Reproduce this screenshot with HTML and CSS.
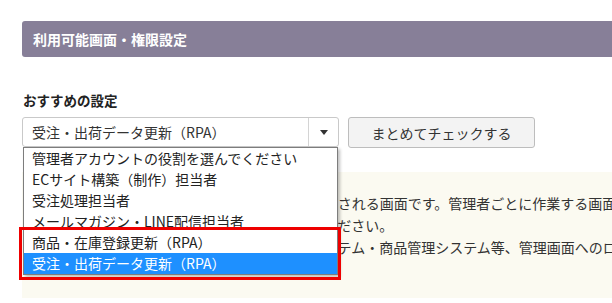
FILE: index.html
```html
<!DOCTYPE html>
<html lang="ja">
    <head>
        <meta charset="UTF-8" />
        <meta name="viewport" content="width=device-width, initial-scale=1.0" />
        <title>利用可能画面・権限設定</title>
        <link rel="stylesheet" href="styles.css">
    </head>
    <body>
        <div class="page">
            <h2 class="section-title">利用可能画面・権限設定</h2>

            <p class="field-label">おすすめの設定</p>
            <div class="preset-row">
                <div class="select-wrap">
                    <div class="select-box">
                        <span class="select-value">受注・出荷データ更新（RPA）</span>
                        <span class="select-arrow"></span>
                    </div>
                    <ul class="select-list">
                        <li>管理者アカウントの役割を選んでください</li>
                        <li>ECサイト構築（制作）担当者</li>
                        <li>受注処理担当者</li>
                        <li>メールマガジン・LINE配信担当者</li>
                        <li>商品・在庫登録更新（RPA）</li>
                        <li class="selected">受注・出荷データ更新（RPA）</li>
                    </ul>
                    <div class="highlight-box"></div>
                </div>
                <button class="check-all">まとめてチェックする</button>
            </div>

            <div class="note">
                <p>チェックした画面が、管理者のログイン後に表示される画面です。管理者ごとに作業する画面</p>
                <p>を選び、各画面の操作権限もあわせて設定してください。</p>
                <p>※ＲＰＡでは、受注管理システム・倉庫管理システム・商品管理システム等、管理画面へのログイン</p>
            </div>
        </div>
    </body>
</html>
```

FILE: styles.css
```css
body {
    margin: 0;
    overflow: hidden;
    font-family: "Noto Sans CJK JP", "Noto Sans", sans-serif;
    color: #333333;
    background-color: #ffffff;
}

.page {
    padding: 21px 0 0 22px;
}

/* section header bar, runs off the right edge */
.section-title {
    margin: 0 -10px 0 0;
    height: 36px;
    padding-left: 11px;
    display: flex;
    align-items: center;
    background-color: #877f98;
    border-radius: 3px;
    color: #ffffff;
    font-size: 14px;
    font-weight: bold;
}

.field-label {
    margin: 33px 0 0 1px;
    line-height: 20px;
    font-size: 13.5px;
    font-weight: bold;
    color: #222222;
}

.preset-row {
    display: flex;
    gap: 9px;
    margin-top: 7px;
}

.select-wrap {
    position: relative;
    width: 317px;
}

.select-box {
    display: flex;
    height: 30px;
    box-sizing: border-box;
    border: 1px solid #c9c9c9;
    border-radius: 3px;
    background-color: #ffffff;
}

.select-value {
    flex: 1;
    padding-left: 9px;
    line-height: 28px;
    font-size: 14px;
    color: #333333;
}

.select-arrow {
    width: 29px;
    border-left: 1px solid #d4d4d4;
    display: flex;
    align-items: center;
    justify-content: center;
}

.select-arrow::after {
    content: "";
    border-left: 4px solid transparent;
    border-right: 4px solid transparent;
    border-top: 5px solid #333333;
}

/* open dropdown list */
.select-list {
    position: absolute;
    top: 30px;
    left: 1px;
    width: 315px;
    box-sizing: border-box;
    margin: 0;
    padding: 0;
    list-style: none;
    background-color: #ffffff;
    border: 1px solid #7d7d7d;
    box-shadow: 2px 2px 3px rgba(0, 0, 0, 0.25);
    z-index: 2;
}

.select-list li {
    height: 21px;
    line-height: 21px;
    padding-left: 8px;
    font-size: 14px;
    color: #222222;
    white-space: nowrap;
}

.select-list li.selected {
    background-color: #1e90ff;
    color: #ffffff;
}

/* red annotation frame */
.highlight-box {
    position: absolute;
    top: 110px;
    left: -3px;
    width: 322px;
    height: 53px;
    box-sizing: border-box;
    border: 3px solid #ee0000;
    z-index: 3;
}

.check-all {
    width: 187px;
    height: 31px;
    background-color: #f3f3f3;
    border: 1px solid #bdbdbd;
    border-radius: 3px;
    font-family: "Noto Sans CJK JP", sans-serif;
    font-size: 14px;
    color: #333333;
}

.note {
    margin: 24px 0 0 0;
    padding: 20px 0 40px 8px;
    background-color: #fbfaf1;
    white-space: nowrap;
}

.note p {
    margin: 0;
    line-height: 22px;
    font-size: 14px;
    color: #333333;
}
```
